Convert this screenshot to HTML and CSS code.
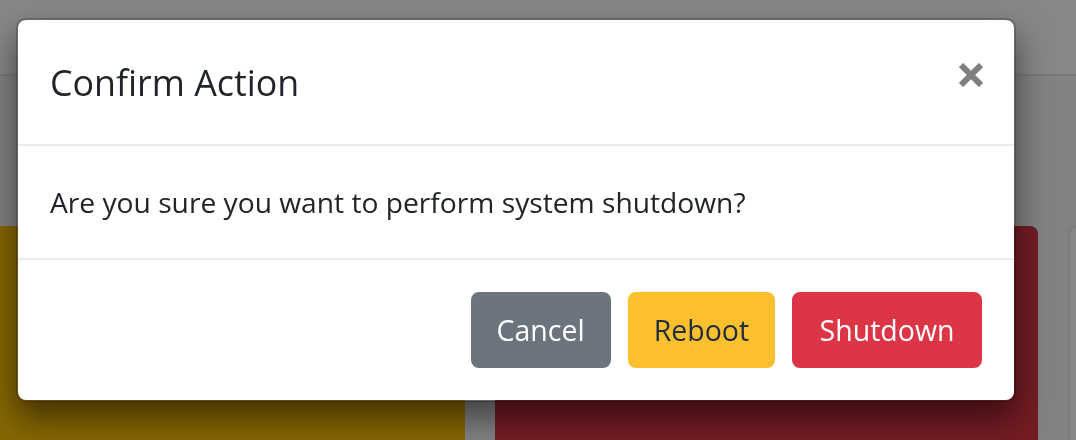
FILE: index.html
```html
<!DOCTYPE html>
<html lang="en">
<head>
<meta charset="utf-8">
<title>Confirm Action</title>
<link rel="stylesheet" href="styles.css">
</head>
<body>
<div class="page">
  <nav class="navbar"></nav>
  <main class="content">
    <div class="cards">
      <div class="card card-warning"></div>
      <div class="card card-danger"></div>
      <div class="card card-light"></div>
    </div>
  </main>
</div>
<div class="backdrop"></div>
<div class="modal">
  <div class="modal-header">
    <h5 class="modal-title">Confirm Action</h5>
    <button class="close" type="button" aria-label="Close">
      <svg width="24" height="24" viewBox="0 0 24 24" aria-hidden="true"><path d="M2 2 L22 22 M22 2 L2 22" stroke="#808080" stroke-width="6" fill="none"/></svg>
    </button>
  </div>
  <div class="modal-body">
    <p class="message">Are you sure you want to perform system shutdown?</p>
  </div>
  <div class="modal-footer">
    <button class="btn btn-secondary" type="button">Cancel</button>
    <button class="btn btn-warning" type="button">Reboot</button>
    <button class="btn btn-danger" type="button">Shutdown</button>
  </div>
</div>
</body>
</html>
```
FILE: styles.css
```css
* { box-sizing: border-box; }
html, body { margin: 0; padding: 0; }
body {
  width: 1076px;
  height: 440px;
  overflow: hidden;
  font-family: "Open Sans", "Noto Sans", sans-serif;
  color: #212529;
  background: #f4f6f9;
}
.page {
  height: 440px;
  overflow: hidden;
}
.navbar {
  height: 76px;
  background: #ffffff;
  border-bottom: 2px solid #e3e6ea;
}
.content {
  padding-top: 150px;
}
.cards {
  display: flex;
  gap: 30px;
  margin-left: -78px;
}
.card {
  flex: 0 0 543px;
  height: 320px;
  border-radius: 8px;
}
.card-warning { background: #ffc107; }
.card-danger { background: #dc3545; }
.card-light { background: #ffffff; border: 2px solid #e6e6e6; }

.backdrop {
  position: fixed;
  inset: 0;
  background: rgba(0, 0, 0, 0.47);
}
.modal {
  position: absolute;
  left: 16px;
  top: 18px;
  width: 1000px;
  background: #ffffff;
  background-clip: padding-box;
  border: 2px solid rgba(0, 0, 0, 0.2);
  border-radius: 10px;
  box-shadow: 0 16px 32px rgba(0, 0, 0, 0.5);
}
.modal-header {
  display: flex;
  align-items: flex-start;
  justify-content: space-between;
  padding: 32px;
  border-bottom: 2px solid #e9ecef;
}
.modal-title {
  margin: 0;
  font-size: 35.8px;
  line-height: 60px;
  font-weight: 400;
  color: #212529;
}
.close {
  display: flex;
  padding: 0;
  margin: 11px -1px 0 0;
  border: 0;
  background: transparent;
}
.close svg { display: block; }
.modal-body {
  padding: 32px;
}
.message {
  margin: 0;
  font-size: 28.2px;
  line-height: 48px;
}
.modal-footer {
  display: flex;
  justify-content: flex-end;
  align-items: center;
  gap: 17px;
  padding: 32px;
  border-top: 2px solid #e9ecef;
}
.btn {
  font-family: inherit;
  font-size: 28.5px;
  line-height: 48px;
  padding: 12px 24px;
  border: 2px solid transparent;
  border-radius: 8px;
  font-weight: 400;
}
.btn-secondary { background: #6c757d; border-color: #6c757d; color: #ffffff; }
.btn-warning { background: #fcbf2d; border-color: #fcbf2d; color: #1f2d3d; }
.btn-danger { background: #dc3545; border-color: #dc3545; color: #ffffff; padding: 12px 25.5px; }
```
